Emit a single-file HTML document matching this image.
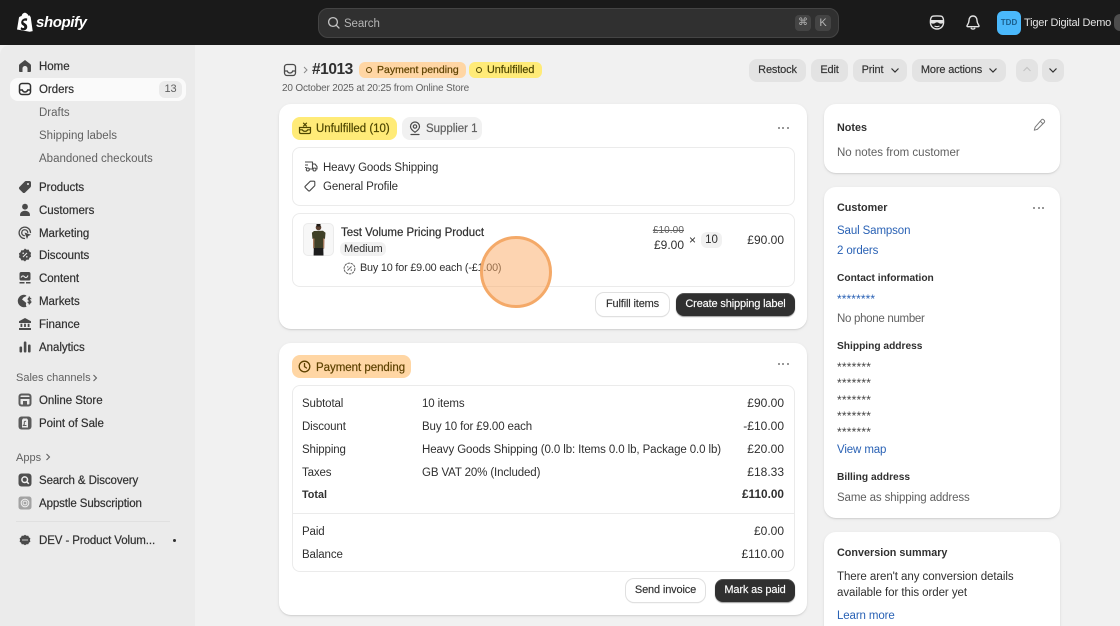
<!DOCTYPE html>
<html lang="en"><head><meta charset="utf-8"><title>Order #1013</title>
<style>
*{box-sizing:border-box}
html,body{margin:0;padding:0;width:1120px;height:626px;overflow:hidden;background:#f1f1f1}
body{position:relative;font-family:"Liberation Sans",sans-serif;font-size:11.5px;color:#303030;letter-spacing:-.12px;filter:blur(.3px)}
.a{position:absolute}
.t{position:absolute;line-height:18px;height:16px;white-space:nowrap}
.r{transform:translateX(-100%)}
.c{transform:translateX(-50%)}
.m{-webkit-text-stroke:.2px currentColor;letter-spacing:-.03px}
.b{font-weight:700;letter-spacing:0;font-size:10.8px;line-height:16px}
.h{font-weight:700;letter-spacing:0;font-size:10.2px}
.n{font-size:12px;letter-spacing:0;line-height:16px}
.k{line-height:16px}
.g{color:#616161}
.l{color:#2a62b5}
.card{position:absolute;background:#fff;border-radius:12px;box-shadow:0 1px 1px rgba(0,0,0,.08),0 1px 3px rgba(0,0,0,.08)}
.box{position:absolute;border:1px solid #ebebeb;border-radius:8px;background:#fff}
.btn{position:absolute;height:23px;line-height:23px;border-radius:8px;background:#e3e3e3;text-align:center;white-space:nowrap;-webkit-text-stroke:.15px currentColor;font-size:11px;letter-spacing:-.15px}
.w{background:#fff;box-shadow:0 0 0 1px #e0e0e0,0 1px 1px rgba(0,0,0,.18)}
.d{background:#303030;color:#fff;box-shadow:0 1px 1px rgba(0,0,0,.4),inset 0 1px 0 rgba(255,255,255,.18)}
.p{position:absolute;border-radius:8px;height:23px}
svg{position:absolute;overflow:visible}
.ic{fill:#4a4a4a}
.st{fill:none;stroke:#4a4a4a;stroke-width:1.3;stroke-linecap:round;stroke-linejoin:round}
.dots i{position:absolute;width:2.2px;height:2.2px;border-radius:50%;background:#777;top:0}
.dots i:nth-child(1){left:0}.dots i:nth-child(2){left:4.6px}.dots i:nth-child(3){left:9.2px}
.star{font-size:12px;letter-spacing:.2px;color:#444}
</style></head><body>

<!-- top bar -->
<div class="a" style="left:0;top:0;width:1120px;height:45px;background:#1a1a1a"></div>
<svg style="left:16px;top:12px" width="18" height="21" viewBox="0 0 18 21"><path fill="#fff" d="M1 17.5 3 5.5C3.2 4.8 4.5 4.400 5.600 4 6 2 7.500 .8 9 .8c.9 0 1.500.4 1.900 1 .6.1 1.200.9 1.500 1.900l1.100-.3 1.200 1.700 2 14-3 .6L1 17.500z"/><path fill="#1a1a1a" d="M11.300 6.800l-.5 2.100c-.6-.3-1.300-.4-2-.3-1.500.1-1.500 1-1.500 1.300.1 1.200 3.700 1.500 3.900 4.500.2 2.300-1.200 3.800-3.300 3.900-2.400.1-3.300-1.100-3.300-1.100l.5-2.100s1.300 1 2.300.9c.7 0 .9-.6.900-1-.1-1.600-2.900-1.500-3.100-4.200-.1-2.200 1.400-4.400 4.600-4.600 1.300-.1 1.500.6 1.500.6z"/></svg>
<div class="t" style="left:36px;top:14px;font:italic 700 15px/18px 'Liberation Sans',sans-serif;color:#fff;letter-spacing:-.4px">shopify</div>

<div class="a" style="left:318px;top:8px;width:521px;height:30px;background:#303030;border:1px solid #444;border-radius:10px"></div>
<svg style="left:327px;top:16px" width="14" height="14" viewBox="0 0 14 14"><circle cx="6" cy="6" r="4.400" fill="none" stroke="#c4c4c4" stroke-width="1.300"/><path d="M9.300 9.300 12 12" stroke="#c4c4c4" stroke-width="1.300" stroke-linecap="round"/></svg>
<div class="t" style="left:344px;top:15px;color:#b5b5b5">Search</div>
<div class="a" style="left:795px;top:15px;width:16px;height:16px;background:#444;border-radius:4px"></div>
<div class="a" style="left:815px;top:15px;width:16px;height:16px;background:#444;border-radius:4px"></div>
<div class="t c k" style="left:803px;top:15px;color:#b5b5b5;font-family:'DejaVu Sans',sans-serif;font-size:10px;letter-spacing:0">⌘</div>
<div class="t c k" style="left:823px;top:15px;color:#b5b5b5;font-size:11px">K</div>

<svg style="left:929px;top:15px" width="16" height="15" viewBox="0 0 16 15"><path d="M3 1.500C4 .8 12 .8 13 1.500c1 .8 1.600 3 1.600 5.500 0 4-2.600 7-6.600 7s-6.600-3-6.600-7c0-2.500.6-4.700 1.600-5.500z" fill="none" stroke="#e3e3e3" stroke-width="1.400"/><path d="M1.500 5h13v2.600c-1 1.400-4 1.400-5 .2-.6-.6-2.400-.6-3 0-1 1.200-4 1.200-5-.2z" fill="#e3e3e3"/><path d="M5.500 11c1.500.8 3.500.8 5 0" stroke="#e3e3e3" stroke-width="1.200" fill="none"/></svg>
<svg style="left:966px;top:15px" width="14" height="15" viewBox="0 0 14 15"><path d="M7 1C4.500 1 3 3 3 5.500c0 3-2 4.500-2 5.500 0 .5.400.7.800.7h10.400c.4 0 .8-.2.800-.7 0-1-2-2.500-2-5.500C11 3 9.500 1 7 1z" fill="none" stroke="#e3e3e3" stroke-width="1.400" stroke-linejoin="round"/><path d="M5.200 13.300c.8 1 2.800 1 3.600 0" fill="none" stroke="#e3e3e3" stroke-width="1.400" stroke-linecap="round"/></svg>
<div class="a" style="left:997px;top:11px;width:24px;height:24px;background:#4ab8fb;border-radius:6px"></div>
<div class="t c k" style="left:1009px;top:15px;font-size:8px;color:#1b5e8c;font-weight:700;letter-spacing:0">TDD</div>
<div class="t k" style="left:1024px;top:14.500px;color:#e3e3e3;font-size:11px;letter-spacing:-.2px">Tiger Digital Demo</div>
<div class="a" style="left:1114px;top:14px;width:20px;height:17px;background:#4d4d4d;border-radius:6px"></div>

<!-- sidebar -->
<div class="a" style="left:0;top:45px;width:195px;height:581px;background:#ebebeb;border-top-left-radius:10px"></div>
<div class="a" style="left:10px;top:78px;width:176px;height:23px;background:#fafafa;border-radius:8px"></div>
<div class="a" style="left:159px;top:81px;width:23px;height:17px;background:#ebebeb;border-radius:6px"></div>
<div class="t c g k" style="left:170.500px;top:81px;font-size:11px">13</div>

<div class="t m" style="left:39px;top:58px">Home</div>
<div class="t m" style="left:39px;top:81px">Orders</div>
<div class="t g" style="left:39px;top:104px;letter-spacing:0">Drafts</div>
<div class="t g" style="left:39px;top:127px;letter-spacing:0">Shipping labels</div>
<div class="t g" style="left:39px;top:150px;letter-spacing:0">Abandoned checkouts</div>
<div class="t m" style="left:39px;top:179px">Products</div>
<div class="t m" style="left:39px;top:202px">Customers</div>
<div class="t m" style="left:39px;top:225px">Marketing</div>
<div class="t m" style="left:39px;top:247px">Discounts</div>
<div class="t m" style="left:39px;top:270px">Content</div>
<div class="t m" style="left:39px;top:293px">Markets</div>
<div class="t m" style="left:39px;top:316px">Finance</div>
<div class="t m" style="left:39px;top:339px">Analytics</div>
<div class="t g k" style="left:16px;top:370px;font-size:11px;letter-spacing:0">Sales channels</div>
<svg style="left:92px;top:374px" width="6" height="8" viewBox="0 0 6 8"><path d="M1.500 1l3 3-3 3" fill="none" stroke="#616161" stroke-width="1.100"/></svg>
<div class="t m" style="left:39px;top:392px">Online Store</div>
<div class="t m" style="left:39px;top:415px">Point of Sale</div>
<div class="t g" style="left:16px;top:449px;font-size:11px;letter-spacing:0">Apps</div>
<svg style="left:45px;top:453px" width="6" height="8" viewBox="0 0 6 8"><path d="M1.500 1l3 3-3 3" fill="none" stroke="#616161" stroke-width="1.100"/></svg>
<div class="t m" style="left:39px;top:472px;letter-spacing:-.1px">Search &amp; Discovery</div>
<div class="t m" style="left:39px;top:495px;letter-spacing:-.1px">Appstle Subscription</div>
<div class="a" style="left:16px;top:521px;width:154px;height:1px;background:#e0e0e0"></div>
<div class="t m" style="left:39px;top:532px;letter-spacing:-.1px">DEV - Product Volum...</div>
<div class="a" style="left:172.500px;top:539px;width:3px;height:3px;border-radius:50%;background:#303030"></div>

<!-- sidebar icons -->
<svg style="left:18px;top:59px" width="14" height="14" viewBox="0 0 14 14"><path class="ic" d="M7 1 1.800 5c-.5.400-.8 1-.8 1.600V12c0 .6.400 1 1 1h2.500V9.500C4.500 8.100 5.600 7 7 7s2.500 1.100 2.500 2.500V13H12c.6 0 1-.4 1-1V6.600c0-.6-.3-1.200-.8-1.600z"/></svg>
<svg style="left:18px;top:82px" width="14" height="14" viewBox="0 0 14 14"><rect x="1.500" y="1.500" width="11" height="11" rx="2.600" fill="none" stroke="#303030" stroke-width="1.500"/><path d="M1.500 8h2.800c.5 1.300 1.500 2 2.700 2s2.200-.7 2.700-2h2.800" fill="none" stroke="#303030" stroke-width="1.500"/></svg>
<svg style="left:18px;top:180px" width="14" height="14" viewBox="0 0 14 14"><path class="ic" d="M8 1h3.500C12.300 1 13 1.700 13 2.500V6c0 .5-.2.900-.5 1.200L7 12.600c-.7.600-1.600.6-2.200 0L1.400 9.200c-.6-.6-.6-1.600 0-2.200L6.800 1.500C7.100 1.200 7.500 1 8 1z"/><circle cx="10" cy="4" r="1" fill="#ebebeb"/></svg>
<svg style="left:18px;top:203px" width="14" height="14" viewBox="0 0 14 14"><circle class="ic" cx="7" cy="3.700" r="2.900"/><path class="ic" d="M2 12.200C2 9.500 4 7.700 7 7.700s5 1.800 5 4.500c0 .5-.4.800-.9.800H2.900c-.5 0-.9-.3-.9-.8z"/></svg>
<svg style="left:18px;top:226px" width="14" height="14" viewBox="0 0 14 14"><path class="st" stroke-width="1.500" d="M12.500 6.500A5.700 5.700 0 1 0 6.500 12.500"/><path class="st" d="M9.700 6.300A3 3 0 1 0 6.300 9.700"/><path class="ic" d="M6.500 6.500 13 8.700 10.300 10 9 13z"/></svg>
<svg style="left:18px;top:248px" width="14" height="14" viewBox="0 0 14 14"><path class="ic" d="M7 .5l1.700 1.200 2-.1.700 1.900 1.700 1.200-.5 2 .5 1.900-1.700 1.200-.7 1.900-2-.1L7 13.500l-1.700-1.200-2 .1-.7-1.900L.9 9.300l.5-1.900-.5-2 1.700-1.200.7-1.900 2 .1z"/><path d="M5 9l4-4" stroke="#ebebeb" stroke-width="1.100"/><circle cx="5.200" cy="5.200" r=".8" fill="#ebebeb"/><circle cx="8.800" cy="8.800" r=".8" fill="#ebebeb"/></svg>
<svg style="left:18px;top:271px" width="14" height="14" viewBox="0 0 14 14"><rect class="ic" x="1.500" y="1" width="11" height="8.500" rx="1.800"/><path d="M3 6.500c1.200-2 2.500-2 3.500-.7s2.500 1 3.500-1.300" fill="none" stroke="#ebebeb" stroke-width="1.100"/><rect class="ic" x="1.500" y="11" width="5" height="1.500"/><rect class="ic" x="8" y="11" width="4.500" height="1.500"/></svg>
<svg style="left:18px;top:294px" width="14" height="14" viewBox="0 0 14 14"><path class="ic" d="M6 .8a6.200 6.200 0 1 0 0 12.400c1 0 1.800-.2 2.600-.6-.9-1-.9-2.400-.3-3.600L6 7 4 5.500l1.500-2 3-1.500C8 1.200 7 .8 6 .8z"/><path class="st" stroke-width="1.100" d="M12.800 4.800c-.6-.9-2.300-.9-2.600.2-.3 1.400 2.800 1.300 2.600 3-.2 1.200-2 1.200-2.800.2M11.300 3v7"/></svg>
<svg style="left:18px;top:317px" width="14" height="14" viewBox="0 0 14 14"><path class="ic" d="M7 1 13 4.200V6H1V4.200zM1 11h12v2H1zM2.500 6.800h1.800V10H2.500zM6.100 6.800h1.800V10H6.100zM9.700 6.800h1.800V10H9.700z"/></svg>
<svg style="left:18px;top:340px" width="14" height="14" viewBox="0 0 14 14"><rect class="ic" x="1.500" y="6.500" width="2.600" height="6" rx="1"/><rect class="ic" x="5.800" y="1.500" width="2.600" height="11" rx="1"/><rect class="ic" x="10" y="4.500" width="2.600" height="8" rx="1"/></svg>
<svg style="left:18px;top:393px" width="14" height="14" viewBox="0 0 14 14"><rect x=".5" y=".5" width="13" height="13" rx="3" fill="#5c5c5c"/><rect x="2.500" y="2.500" width="9" height="9" rx="1" fill="#ebebeb"/><path d="M2.500 4h9v2h-9z" fill="#5c5c5c"/><path d="M5 11.500V8h4v3.500z" fill="#5c5c5c"/></svg>
<svg style="left:18px;top:416px" width="14" height="14" viewBox="0 0 14 14"><rect x=".5" y=".5" width="13" height="13" rx="3" fill="#5c5c5c"/><path d="M5 2.500h4l1 1.500v7.500H4V4z" fill="#ebebeb"/><path d="M8 5.500C7 5 6 5.500 6.300 7c.2 1-.3 2-.8 2.500h3" fill="none" stroke="#5c5c5c" stroke-width="1"/></svg>
<svg style="left:18px;top:473px" width="14" height="14" viewBox="0 0 14 14"><rect x=".5" y=".5" width="13" height="13" rx="3" fill="#4f4f4f"/><circle cx="6.700" cy="6.700" r="2.800" fill="none" stroke="#f1f1f1" stroke-width="1.500"/><path d="M8.800 8.800 10.800 10.800" stroke="#f1f1f1" stroke-width="1.500"/></svg>
<svg style="left:18px;top:496px" width="14" height="14" viewBox="0 0 14 14"><rect x=".5" y=".5" width="13" height="13" rx="2.500" fill="#a3a3a3"/><circle cx="7" cy="7" r="3.800" fill="none" stroke="#ebebeb" stroke-width="1.100"/><circle cx="7" cy="7" r="1.900" fill="none" stroke="#ebebeb" stroke-width="1"/></svg>
<svg style="left:19px;top:534px" width="12" height="12" viewBox="0 0 12 12"><path class="ic" d="M6 .8l1.500 1 1.800-.1.600 1.600 1.500 1.100-.5 1.600.5 1.600-1.500 1.100-.6 1.600-1.800-.1-1.500 1-1.500-1-1.800.1-.6-1.600L.6 7.600 1.100 6 .6 4.400 2.100 3.300l.6-1.600 1.800.1z"/><path d="M3 6h6" stroke="#ebebeb" stroke-width=".8"/></svg>

<!-- header -->
<svg style="left:283px;top:63px" width="14" height="14" viewBox="0 0 14 14"><rect x="1.500" y="1.500" width="11" height="11" rx="2.600" fill="none" stroke="#4a4a4a" stroke-width="1.300"/><path d="M1.500 8h2.800c.5 1.300 1.500 2 2.700 2s2.200-.7 2.700-2h2.800" fill="none" stroke="#4a4a4a" stroke-width="1.300"/></svg>
<svg style="left:303px;top:66px" width="5" height="8" viewBox="0 0 5 8"><path d="M1 1l3 3-3 3" fill="none" stroke="#8a8a8a" stroke-width="1"/></svg>
<div class="t k" style="left:312px;top:62px;font-size:15.500px;font-weight:700;letter-spacing:-.45px;color:#303030">#1013</div>
<div class="a" style="left:359px;top:62px;width:107px;height:16px;background:#ffd6a4;border-radius:6px"></div>
<div class="a" style="left:469px;top:62px;width:73px;height:16px;background:#ffeb78;border-radius:6px"></div>
<div class="a" style="left:366px;top:67px;width:6px;height:6px;border:1.200px solid #5e4200;border-radius:50%"></div>
<div class="a" style="left:476px;top:67px;width:6px;height:6px;border:1.200px solid #4f4700;border-radius:50%"></div>
<div class="t m k" style="left:377px;top:62px;font-size:10.500px;color:#5e4200;letter-spacing:0">Payment pending</div>
<div class="t m k" style="left:487px;top:62px;font-size:10.800px;color:#4f4700;letter-spacing:0">Unfulfilled</div>
<div class="t g k" style="left:282px;top:80.500px;font-size:10px;letter-spacing:-.18px">20 October 2025 at 20:25 from Online Store</div>

<div class="btn" style="left:749px;top:59px;width:57px">Restock</div>
<div class="btn" style="left:811px;top:59px;width:37px">Edit</div>
<div class="btn" style="left:853px;top:59px;width:54px;padding-right:15px">Print</div>
<svg style="left:890px;top:67px" width="10" height="7" viewBox="0 0 10 7"><path d="M1.500 1.500 5 5l3.500-3.500" fill="none" stroke="#303030" stroke-width="1.200"/></svg>
<div class="btn" style="left:912px;top:59px;width:94px;padding-right:15px">More actions</div>
<svg style="left:988px;top:67px" width="10" height="7" viewBox="0 0 10 7"><path d="M1.500 1.500 5 5l3.500-3.500" fill="none" stroke="#303030" stroke-width="1.200"/></svg>
<div class="btn" style="left:1016px;top:59px;width:22px"></div>
<svg style="left:1022px;top:66px" width="10" height="7" viewBox="0 0 10 7"><path d="M1.500 5 5 1.500 8.500 5" fill="none" stroke="#c4c4c4" stroke-width="1.200"/></svg>
<div class="btn" style="left:1042px;top:59px;width:22px"></div>
<svg style="left:1048px;top:67px" width="10" height="7" viewBox="0 0 10 7"><path d="M1.500 1.500 5 5l3.500-3.500" fill="none" stroke="#303030" stroke-width="1.200"/></svg>

<!-- card 1 -->
<div class="card" style="left:279px;top:104px;width:528px;height:225px"></div>
<div class="p" style="left:292px;top:117px;width:105px;background:#ffeb78"></div>
<div class="p" style="left:402px;top:117px;width:80px;background:#f1f1f1"></div>
<svg style="left:298px;top:121px" width="14" height="14" viewBox="0 0 14 14"><path d="M1.500 6.500h2.300M10.200 6.500h2.300V11c0 .8-.6 1.500-1.500 1.500H3c-.9 0-1.500-.7-1.500-1.500V6.500zM1.500 8.800h2.800c.5 1 1.500 1.500 2.700 1.500s2.200-.5 2.700-1.500h2.800" fill="none" stroke="#4f4700" stroke-width="1.200"/><path d="M5.200 1.800 8.800 5.400M8.800 1.800 5.200 5.400" stroke="#4f4700" stroke-width="1.200"/></svg>
<div class="t m" style="left:316px;top:120px;color:#4f4700">Unfulfilled (10)</div>
<svg style="left:408px;top:121px" width="14" height="15" viewBox="0 0 14 15"><path d="M7 1a4.500 4.500 0 0 0-4.500 4.500C2.500 8.200 5 10 7 11.300c2-1.300 4.500-3.100 4.500-5.800A4.500 4.500 0 0 0 7 1z" fill="none" stroke="#4a4a4a" stroke-width="1.200"/><circle cx="7" cy="5.500" r="1.700" fill="none" stroke="#4a4a4a" stroke-width="1.200"/><path d="M3 13.500h8" stroke="#4a4a4a" stroke-width="1.200" stroke-linecap="round"/></svg>
<div class="t m g" style="left:426px;top:120px">Supplier 1</div>
<div class="a dots" style="left:777.500px;top:127px"><i></i><i></i><i></i></div>

<div class="box" style="left:292px;top:147px;width:503px;height:59px"></div>
<svg style="left:304px;top:160px" width="14" height="13" viewBox="0 0 14 13"><path d="M1 2h7.500v7H5.500M8.500 4h2.500l2 2.500V9h-1M1 5h3M1 7.500h1.500" fill="none" stroke="#4a4a4a" stroke-width="1.100" stroke-linejoin="round"/><circle cx="3.800" cy="9.500" r="1.500" fill="none" stroke="#4a4a4a" stroke-width="1.100"/><circle cx="10.500" cy="9.500" r="1.500" fill="none" stroke="#4a4a4a" stroke-width="1.100"/></svg>
<div class="t" style="left:323px;top:158.500px">Heavy Goods Shipping</div>
<svg style="left:304px;top:180px" width="12" height="12" viewBox="0 0 12 12"><path d="M6.800 1.200h3c.6 0 1 .4 1 1v3c0 .4-.1.700-.4.900L5.800 10.700c-.4.400-1 .4-1.400 0L1.300 7.600c-.4-.4-.4-1 0-1.400L5.900 1.600c.2-.3.500-.4.900-.4z" fill="none" stroke="#4a4a4a" stroke-width="1.100"/></svg>
<div class="t" style="left:323px;top:178px">General Profile</div>

<div class="box" style="left:292px;top:213px;width:503px;height:74px"></div>
<div class="a" style="left:303px;top:223px;width:31px;height:33px;border:1px solid #ebebeb;border-radius:5px;background:#f7f7f7;overflow:hidden"></div>
<svg style="left:303px;top:223px" width="31" height="33" viewBox="0 0 31 33"><circle cx="15.500" cy="4.500" r="2.800" fill="#5a4030"/><rect x="13.500" y="1" width="4" height="2.500" fill="#1f1a16"/><path d="M11 8l9-.2 2.500 2-.5 6-1.500.2-.3 9.500h-9l-.3-9.500-1.500-.2-.5-6z" fill="#3f4027"/><path d="M10 15.500h1.500l-.3 10-1.200-.2zM20 15.500h1.500l-.2 10-1.200.2z" fill="#a5795d"/><path d="M10.800 25h9.500l.2 7.500H10.600z" fill="#1c1c1c"/></svg>
<div class="t m" style="left:341px;top:224px">Test Volume Pricing Product</div>
<div class="a" style="left:340px;top:241.500px;width:46px;height:14px;background:#f1f1f1;border-radius:6px"></div>
<div class="t k" style="left:344px;top:240.500px;font-size:11px;letter-spacing:-.1px">Medium</div>
<svg style="left:342.500px;top:261.500px" width="13" height="13" viewBox="0 0 13 13"><circle cx="6.500" cy="6.500" r="5.400" fill="none" stroke="#616161" stroke-width="1" stroke-dasharray="2.600 .7"/><path d="M4.500 8.500l4-4" stroke="#616161" stroke-width="1"/><circle cx="4.700" cy="4.900" r=".7" fill="#616161"/><circle cx="8.300" cy="8.100" r=".7" fill="#616161"/></svg>
<div class="t k" style="left:360px;top:260px;font-size:10.800px;letter-spacing:-.17px">Buy 10 for £9.00 each (-£1.00)</div>

<div class="t r g k" style="left:684px;top:223px;font-size:10px;text-decoration:line-through;letter-spacing:.1px">£10.00</div>
<div class="t r n" style="left:684px;top:237px">£9.00</div>
<div class="t k" style="left:689px;top:231.500px;font-size:12px;letter-spacing:0">×</div>
<div class="a" style="left:701px;top:232px;width:21px;height:16px;background:#f1f1f1;border-radius:6px"></div>
<div class="t c k" style="left:711.500px;top:232px;font-size:11.500px;letter-spacing:0">10</div>
<div class="t r n" style="left:784px;top:232px">£90.00</div>

<div class="btn w" style="left:596px;top:293px;width:73px">Fulfill items</div>
<div class="btn d" style="left:676px;top:293px;width:119px">Create shipping label</div>

<!-- card 2 -->
<div class="card" style="left:279px;top:343px;width:528px;height:272px"></div>
<div class="p" style="left:292px;top:355px;width:119px;background:#ffd6a4"></div>
<svg style="left:298px;top:360px" width="13" height="13" viewBox="0 0 13 13"><circle cx="6.500" cy="6.500" r="5.300" fill="none" stroke="#5e4200" stroke-width="1.300"/><path d="M6.500 3.500v3.200l2 1.300" fill="none" stroke="#5e4200" stroke-width="1.300" stroke-linecap="round"/></svg>
<div class="t m" style="left:316px;top:359px;color:#5e4200">Payment pending</div>
<div class="a dots" style="left:777.500px;top:362.500px"><i></i><i></i><i></i></div>
<div class="box" style="left:292px;top:385px;width:503px;height:187px"></div>
<div class="a" style="left:293px;top:513px;width:501px;height:1px;background:#ebebeb"></div>

<div class="t" style="left:302px;top:395px">Subtotal</div><div class="t" style="left:422px;top:395px">10 items</div><div class="t r n" style="left:784px;top:395px">£90.00</div>
<div class="t" style="left:302px;top:418px">Discount</div><div class="t" style="left:422px;top:418px">Buy 10 for £9.00 each</div><div class="t r n" style="left:784px;top:418px">-£10.00</div>
<div class="t" style="left:302px;top:441px">Shipping</div><div class="t" style="left:422px;top:441px;letter-spacing:-.1px">Heavy Goods Shipping (0.0 lb: Items 0.0 lb, Package 0.0 lb)</div><div class="t r n" style="left:784px;top:441px">£20.00</div>
<div class="t" style="left:302px;top:463.500px">Taxes</div><div class="t" style="left:422px;top:463.500px">GB VAT 20% (Included)</div><div class="t r n" style="left:784px;top:463.500px">£18.33</div>
<div class="t b" style="left:302px;top:487px">Total</div><div class="t r b" style="left:784px;top:486px;font-size:11.800px">£110.00</div>
<div class="t" style="left:302px;top:523px">Paid</div><div class="t r n" style="left:784px;top:523px">£0.00</div>
<div class="t" style="left:302px;top:546px">Balance</div><div class="t r n" style="left:784px;top:546px">£110.00</div>

<div class="btn w" style="left:626px;top:579px;width:79px">Send invoice</div>
<div class="btn d" style="left:715px;top:579px;width:80px">Mark as paid</div>

<!-- right column -->
<div class="card" style="left:824px;top:104px;width:236px;height:69px"></div>
<div class="t b" style="left:837px;top:119.500px">Notes</div>
<svg style="left:1032px;top:118px" width="14" height="14" viewBox="0 0 14 14"><path d="M9.500 1.800c.6-.6 1.500-.6 2.100 0l.6.6c.6.6.6 1.500 0 2.100L5.300 11.400l-3 .8.800-3z" fill="none" stroke="#7a7a7a" stroke-width="1" stroke-linejoin="round"/><path d="M8.200 3.100l2.700 2.700" stroke="#7a7a7a" stroke-width="1"/></svg>
<div class="t g" style="left:837px;top:144px;letter-spacing:0">No notes from customer</div>

<div class="card" style="left:824px;top:187px;width:236px;height:331px"></div>
<div class="t b" style="left:837px;top:199.500px">Customer</div>
<div class="a dots" style="left:1033px;top:206.500px"><i></i><i></i><i></i></div>
<div class="t l" style="left:837px;top:222px">Saul Sampson</div>
<div class="t l" style="left:837px;top:241.500px">2 orders</div>
<div class="t h" style="left:837px;top:269.500px">Contact information</div>
<div class="t l" style="left:837px;top:290px;font-size:12px;letter-spacing:.1px">********</div>
<div class="t g" style="left:837px;top:310px;letter-spacing:-.3px">No phone number</div>
<div class="t h" style="left:837px;top:338px">Shipping address</div>
<div class="t star" style="left:837px;top:358px">*******</div>
<div class="t star" style="left:837px;top:374px">*******</div>
<div class="t star" style="left:837px;top:390.500px">*******</div>
<div class="t star" style="left:837px;top:407px">*******</div>
<div class="t star" style="left:837px;top:423px">*******</div>
<div class="t l" style="left:837px;top:440.500px">View map</div>
<div class="t h" style="left:837px;top:468.500px">Billing address</div>
<div class="t g" style="left:837px;top:489px">Same as shipping address</div>

<div class="card" style="left:824px;top:532px;width:236px;height:110px"></div>
<div class="t b" style="left:837px;top:545px">Conversion summary</div>
<div class="t" style="left:837px;top:567.500px;letter-spacing:-.06px">There aren't any conversion details</div>
<div class="t" style="left:837px;top:583.500px;letter-spacing:-.06px">available for this order yet</div>
<div class="t l" style="left:837px;top:606.500px">Learn more</div>

<!-- click highlight -->
<div class="a" style="left:480px;top:236px;width:72px;height:72px;border-radius:50%;background:rgba(252,170,100,.5);border:3px solid #f4a968"></div>
</body></html>
